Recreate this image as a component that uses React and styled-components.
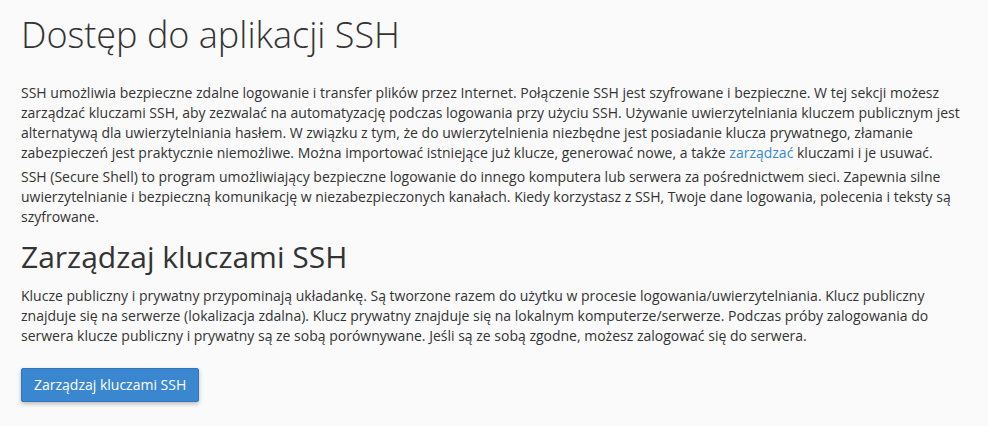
import React from "react";
import styled, { createGlobalStyle } from "styled-components";

const GlobalStyle = createGlobalStyle`
  html, body {
    margin: 0;
    padding: 0;
    background: #fafafa;
  }
  body {
    font-family: "Open Sans", "Liberation Sans", sans-serif;
    font-size: 14px;
    color: #333;
  }
`;

const Page = styled.main`
  padding: 15px 21px 24px 21px;
  max-width: 946px;
`;

const Title = styled.h1`
  margin: 0 0 28px;
  font-size: 36px;
  font-weight: 300;
  line-height: 1.1;
  color: #333;
`;

const SectionTitle = styled.h2`
  margin: 13px 0 13px;
  font-size: 30px;
  font-weight: 400;
  line-height: 1.1;
  color: #333;
`;

const Text = styled.p`
  margin: 0 0 4px;
  line-height: 20px;
`;

const TextLink = styled.a`
  color: #3b88d0;
  text-decoration: none;
  cursor: pointer;
`;

const Actions = styled.div`
  margin-top: 22px;
`;

const PrimaryButton = styled.button`
  font-family: inherit;
  font-size: 14px;
  color: #fff;
  background: #3a87cf;
  border: 1px solid #2f76b9;
  border-radius: 2px;
  padding: 7px 12px;
  line-height: 1.3;
  box-shadow: 0 2px 4px rgba(0, 0, 0, 0.25);
  cursor: pointer;
`;

export default function App() {
  return (
    <>
      <GlobalStyle />
      <Page>
        <Title>Dostęp do aplikacji SSH</Title>
        <Text>
          SSH umożliwia bezpieczne zdalne logowanie i transfer plików przez
          Internet. Połączenie SSH jest szyfrowane i bezpieczne. W tej sekcji
          możesz zarządzać kluczami SSH, aby zezwalać na automatyzację podczas
          logowania przy użyciu SSH. Używanie uwierzytelniania kluczem
          publicznym jest alternatywą dla uwierzytelniania hasłem. W związku z
          tym, że do uwierzytelnienia niezbędne jest posiadanie klucza
          prywatnego, złamanie zabezpieczeń jest praktycznie niemożliwe. Można
          importować istniejące już klucze, generować nowe, a także{" "}
          <TextLink>zarządzać</TextLink> kluczami i je usuwać.
        </Text>
        <Text>
          SSH (Secure Shell) to program umożliwiający bezpieczne logowanie do
          innego komputera lub serwera za pośrednictwem sieci. Zapewnia silne
          uwierzytelnianie i bezpieczną komunikację w niezabezpieczonych
          kanałach. Kiedy korzystasz z SSH, Twoje dane logowania, polecenia i
          teksty są szyfrowane.
        </Text>
        <SectionTitle>Zarządzaj kluczami SSH</SectionTitle>
        <Text>
          Klucze publiczny i prywatny przypominają układankę. Są tworzone razem
          do użytku w procesie logowania/uwierzytelniania. Klucz publiczny
          znajduje się na serwerze (lokalizacja zdalna). Klucz prywatny znajduje
          się na lokalnym komputerze/serwerze. Podczas próby zalogowania do
          serwera klucze publiczny i prywatny są ze sobą porównywane. Jeśli są
          ze sobą zgodne, możesz zalogować się do serwera.
        </Text>
        <Actions>
          <PrimaryButton type="button">Zarządzaj kluczami SSH</PrimaryButton>
        </Actions>
      </Page>
    </>
  );
}
